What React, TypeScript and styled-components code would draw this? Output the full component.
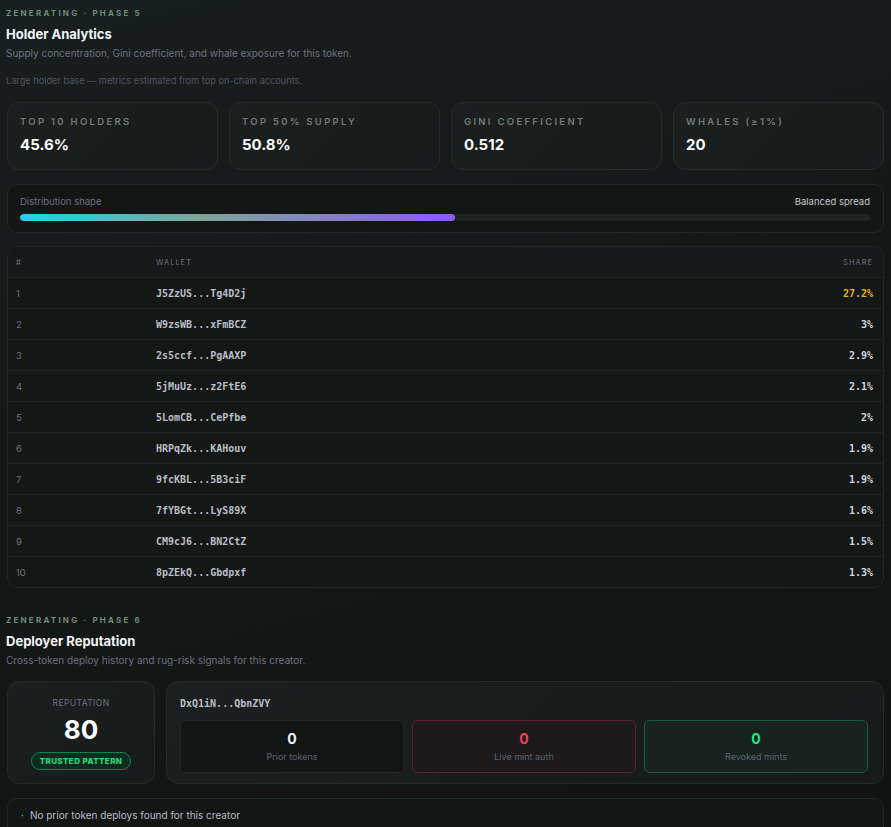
import * as React from "react";
import styled, { createGlobalStyle } from "styled-components";

const GlobalStyle = createGlobalStyle`
  html, body {
    margin: 0;
    padding: 0;
    background: #131817;
  }
  body {
    font-family: Inter, "Noto Sans", sans-serif;
    color: #e5e7eb;
  }
  * { box-sizing: border-box; }
`;

const Page = styled.div`
  min-height: 827px;
  background: linear-gradient(165deg, #16201f 0%, #131817 45%, #121414 100%);
  padding: 7px 7px 0 7px;
`;

const Section = styled.section`
  display: flex;
  flex-direction: column;
  margin-bottom: 26px;
`;

const Eyebrow = styled.div`
  font-size: 8px;
  font-weight: 700;
  letter-spacing: 2.2px;
  color: #6f8a7d;
  text-transform: uppercase;
  margin-left: -1px;
  line-height: 12px;
`;

const Title = styled.h2`
  margin: 6px 0 0 -1px;
  font-size: 13px;
  font-weight: 700;
  color: #f3f4f6;
  line-height: 18px;
`;

const Subtitle = styled.p`
  margin: 3px 0 0 -1px;
  font-size: 10px;
  color: #6b7280;
  line-height: 14px;
`;

const Note = styled.p`
  margin: 14px 0 0 -1px;
  font-size: 9.2px;
  color: #4d5560;
  line-height: 14px;
`;

const StatGrid = styled.div`
  display: grid;
  grid-template-columns: repeat(4, 1fr);
  gap: 11px;
  margin-top: 14px;
`;

const Card = styled.div`
  background: linear-gradient(135deg, #1a201f 0%, #171b1b 100%);
  border: 1px solid #232b29;
  border-radius: 12px;
`;

const StatCard = styled(Card)`
  height: 68px;
  padding: 13px 12px;
  display: flex;
  flex-direction: column;
  gap: 8px;
`;

const StatLabel = styled.div`
  font-size: 9.5px;
  font-weight: 600;
  letter-spacing: 2.3px;
  color: #6d7e76;
  text-transform: uppercase;
  line-height: 12px;
`;

const StatValue = styled.div`
  font-size: 15px;
  font-weight: 700;
  color: #f9fafb;
  line-height: 18px;
`;

const ShapePanel = styled.div`
  margin-top: 14px;
  height: 49px;
  background: #121615;
  border: 1px solid #202725;
  border-radius: 10px;
  padding: 10px 13px 0 12px;
  display: flex;
  flex-direction: column;
  gap: 6px;
`;

const ShapeHeader = styled.div`
  display: flex;
  justify-content: space-between;
  font-size: 9.5px;
  line-height: 13px;
`;

const Muted = styled.span`
  color: #6b7280;
`;

const Bright = styled.span`
  color: #c4c8cd;
`;

const Track = styled.div`
  height: 7px;
  border-radius: 4px;
  background: #1e2422;
  overflow: hidden;
`;

const Fill = styled.div`
  height: 100%;
  border-radius: 4px;
  background: linear-gradient(90deg, #22d3ee 0%, #7ea596 42%, #8b5cf6 100%);
`;

const Table = styled.div`
  margin-top: 13px;
  background: #131716;
  border: 1px solid #1f2624;
  border-radius: 10px;
  overflow: hidden;
`;

const Row = styled.div<{ $head?: boolean }>`
  display: grid;
  grid-template-columns: 140px 1fr 120px;
  align-items: center;
  height: ${(p) => (p.$head ? "30px" : "31px")};
  padding: 0 10px 0 8px;
  border-top: ${(p) => (p.$head ? "none" : "1px solid #1c2321")};
  background: ${(p) => (p.$head ? "#141a19" : "transparent")};
`;

const HeadCell = styled.div<{ $right?: boolean }>`
  font-size: 7.5px;
  letter-spacing: 1px;
  color: #6b7280;
  text-align: ${(p) => (p.$right ? "right" : "left")};
`;

const RankCell = styled.div`
  font-size: 9.5px;
  color: #6b7280;
`;

const WalletCell = styled.div`
  font-family: "DejaVu Sans Mono", "Liberation Mono", monospace;
  font-size: 10px;
  font-weight: 600;
  color: #b9bec6;
`;

const ShareCell = styled.div<{ $top?: boolean }>`
  font-family: "DejaVu Sans Mono", "Liberation Mono", monospace;
  font-size: 10px;
  font-weight: 700;
  text-align: right;
  color: ${(p) => (p.$top ? "#eab308" : "#d1d5db")};
`;

const RepRow = styled.div`
  display: grid;
  grid-template-columns: 148px 1fr;
  gap: 11px;
  margin-top: 14px;
`;

const RepCard = styled(Card)`
  height: 103px;
  display: flex;
  flex-direction: column;
  align-items: center;
  padding-top: 16px;
`;

const RepLabel = styled.div`
  font-size: 8.5px;
  color: #6b7280;
  letter-spacing: 0.4px;
  line-height: 11px;
`;

const RepScore = styled.div`
  font-size: 26px;
  font-weight: 700;
  color: #ffffff;
  line-height: 30px;
  margin-top: 6px;
`;

const Badge = styled.div`
  margin-top: 7px;
  padding: 0 8px;
  height: 18px;
  display: flex;
  align-items: center;
  border-radius: 9px;
  border: 1px solid #14824f;
  background: #0f2a1e;
  color: #2bd981;
  font-size: 8px;
  font-weight: 800;
  letter-spacing: 0.4px;
`;

const DeployerCard = styled(Card)`
  height: 103px;
  padding: 15px 15px 0 13px;
  display: flex;
  flex-direction: column;
  gap: 10px;
`;

const DeployerWallet = styled.div`
  font-family: "DejaVu Sans Mono", "Liberation Mono", monospace;
  font-size: 10px;
  font-weight: 600;
  color: #b9bec6;
  line-height: 13px;
`;

const MiniGrid = styled.div`
  display: grid;
  grid-template-columns: repeat(3, 1fr);
  gap: 8px;
`;

const tones = {
  neutral: { bg: "#111514", border: "#1f2624", fg: "#f3f4f6" },
  danger: { bg: "#1e1a1c", border: "#5a2231", fg: "#f43f5e" },
  good: { bg: "#17231f", border: "#1b5a3e", fg: "#22e58a" },
};

const MiniBox = styled.div<{ $tone: keyof typeof tones }>`
  height: 53px;
  border-radius: 6px;
  background: ${(p) => tones[p.$tone].bg};
  border: 1px solid ${(p) => tones[p.$tone].border};
  display: flex;
  flex-direction: column;
  align-items: center;
  justify-content: center;
  gap: 4px;
`;

const MiniValue = styled.div<{ $tone: keyof typeof tones }>`
  font-family: Inter, sans-serif;
  font-size: 14px;
  font-weight: 700;
  color: ${(p) => tones[p.$tone].fg};
  line-height: 17px;
`;

const MiniLabel = styled.div`
  font-size: 9px;
  color: #5b636e;
  line-height: 12px;
`;

const EmptyCard = styled.div`
  margin-top: 14px;
  height: 40px;
  background: #121615;
  border: 1px solid #1c2a24;
  border-radius: 10px;
  padding: 10px 13px 0 13px;
  display: flex;
  align-items: flex-start;
  gap: 6px;
  font-size: 10px;
  color: #b7bcc3;
`;

const Dot = styled.span`
  color: #2dd4bf;
  font-size: 10px;
`;

const stats = [
  { label: "Top 10 holders", value: "45.6%" },
  { label: "Top 50% supply", value: "50.8%" },
  { label: "Gini coefficient", value: "0.512" },
  { label: "Whales (≥1%)", value: "20" },
];

const holders = [
  ["J5ZzUS...Tg4D2j", "27.2%"],
  ["W9zsWB...xFmBCZ", "3%"],
  ["2s5ccf...PgAAXP", "2.9%"],
  ["5jMuUz...z2FtE6", "2.1%"],
  ["5LomCB...CePfbe", "2%"],
  ["HRPqZk...KAHouv", "1.9%"],
  ["9fcKBL...5B3ciF", "1.9%"],
  ["7fYBGt...LyS89X", "1.6%"],
  ["CM9cJ6...BN2CtZ", "1.5%"],
  ["8pZEkQ...Gbdpxf", "1.3%"],
];

const App: React.FC = () => {
  const spread = 51.2;
  return (
    <Page>
      <GlobalStyle />
      <Section>
        <Eyebrow>Zenerating · Phase 5</Eyebrow>
        <Title>Holder Analytics</Title>
        <Subtitle>
          Supply concentration, Gini coefficient, and whale exposure for this token.
        </Subtitle>
        <Note>Large holder base — metrics estimated from top on-chain accounts.</Note>

        <StatGrid>
          {stats.map((s) => (
            <StatCard key={s.label}>
              <StatLabel>{s.label}</StatLabel>
              <StatValue>{s.value}</StatValue>
            </StatCard>
          ))}
        </StatGrid>

        <ShapePanel>
          <ShapeHeader>
            <Muted>Distribution shape</Muted>
            <Bright>Balanced spread</Bright>
          </ShapeHeader>
          <Track>
            <Fill style={{ width: `${spread}%` }} />
          </Track>
        </ShapePanel>

        <Table>
          <Row $head>
            <HeadCell>#</HeadCell>
            <HeadCell>WALLET</HeadCell>
            <HeadCell $right>SHARE</HeadCell>
          </Row>
          {holders.map(([w, s], i) => (
            <Row key={w}>
              <RankCell>{i + 1}</RankCell>
              <WalletCell>{w}</WalletCell>
              <ShareCell $top={i === 0}>{s}</ShareCell>
            </Row>
          ))}
        </Table>
      </Section>

      <Section>
        <Eyebrow>Zenerating · Phase 6</Eyebrow>
        <Title>Deployer Reputation</Title>
        <Subtitle>Cross-token deploy history and rug-risk signals for this creator.</Subtitle>

        <RepRow>
          <RepCard>
            <RepLabel>REPUTATION</RepLabel>
            <RepScore>80</RepScore>
            <Badge>TRUSTED PATTERN</Badge>
          </RepCard>
          <DeployerCard>
            <DeployerWallet>DxQ1iN...QbnZVY</DeployerWallet>
            <MiniGrid>
              <MiniBox $tone="neutral">
                <MiniValue $tone="neutral">0</MiniValue>
                <MiniLabel>Prior tokens</MiniLabel>
              </MiniBox>
              <MiniBox $tone="danger">
                <MiniValue $tone="danger">0</MiniValue>
                <MiniLabel>Live mint auth</MiniLabel>
              </MiniBox>
              <MiniBox $tone="good">
                <MiniValue $tone="good">0</MiniValue>
                <MiniLabel>Revoked mints</MiniLabel>
              </MiniBox>
            </MiniGrid>
          </DeployerCard>
        </RepRow>

        <EmptyCard>
          <Dot>·</Dot>
          <span>No prior token deploys found for this creator</span>
        </EmptyCard>
      </Section>
    </Page>
  );
};

export default App;
